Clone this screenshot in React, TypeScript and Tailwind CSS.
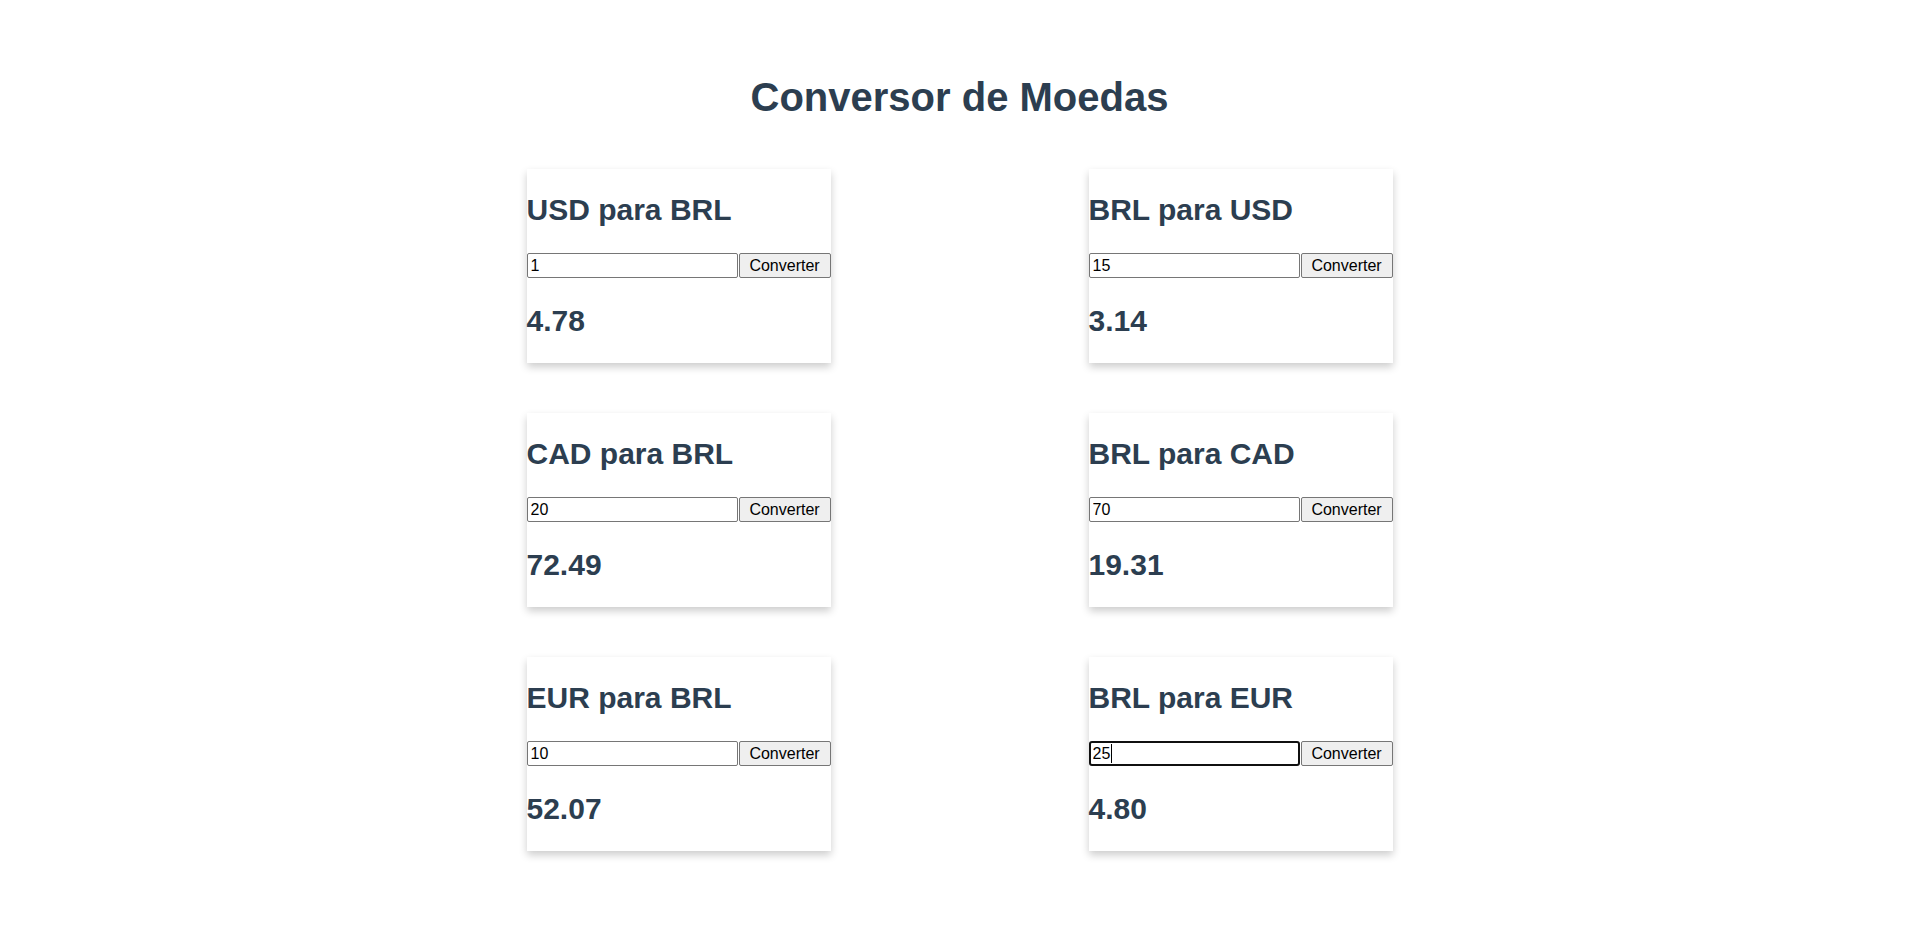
import React from 'react';

type Pair = { title: string; value: string; result: string; focused?: boolean };

const pairs: Pair[] = [
  { title: 'USD para BRL', value: '1', result: '4.78' },
  { title: 'BRL para USD', value: '15', result: '3.14' },
  { title: 'CAD para BRL', value: '20', result: '72.49' },
  { title: 'BRL para CAD', value: '70', result: '19.31' },
  { title: 'EUR para BRL', value: '10', result: '52.07' },
  { title: 'BRL para EUR', value: '25', result: '4.80', focused: true },
];

const Card: React.FC<{ pair: Pair }> = ({ pair }) => (
  <div className="w-[304px] h-[194px] bg-white flex flex-col pt-[24px] shadow-[0_4px_8px_0_rgba(0,0,0,0.2)]">
    <h2 className="text-[30px] font-bold leading-[34px] text-[#2c3e50]">{pair.title}</h2>
    <div className="mt-[26px] flex items-center h-[25px]">
      <div className="relative">
        <input
          type="text"
          defaultValue={pair.value}
          className={
            pair.focused
              ? 'w-[211px] h-[25px] px-[2px] text-[16px] text-black bg-white border-2 border-[#101010] rounded-[3px] outline-none'
              : 'w-[211px] h-[25px] px-[3px] text-[16px] text-black bg-white border border-[#767676] rounded-[2px] outline-none'
          }
        />
        {pair.focused && <span className="absolute left-[22px] top-[3px] w-px h-[19px] bg-black" />}
      </div>
      <button className="ml-[1px] w-[92px] h-[25px] text-[16px] text-black bg-[#efefef] border border-[#767676] rounded-[2px]">
        Converter
      </button>
    </div>
    <h2 className="mt-[26px] text-[30px] font-bold leading-[34px] text-[#2c3e50]">{pair.result}</h2>
  </div>
);

export default function App() {
  return (
    <div className="min-h-screen bg-white font-['Liberation_Sans',Arial,sans-serif]">
      <h1 className="pt-[74px] text-center text-[40px] font-bold leading-[46px] text-[#2c3e50]">
        Conversor de Moedas
      </h1>
      <div className="mt-[49px] mx-auto w-[866px] grid grid-cols-[304px_304px] justify-between gap-y-[50px]">
        {pairs.map((p) => (
          <Card key={p.title} pair={p} />
        ))}
      </div>
    </div>
  );
}
